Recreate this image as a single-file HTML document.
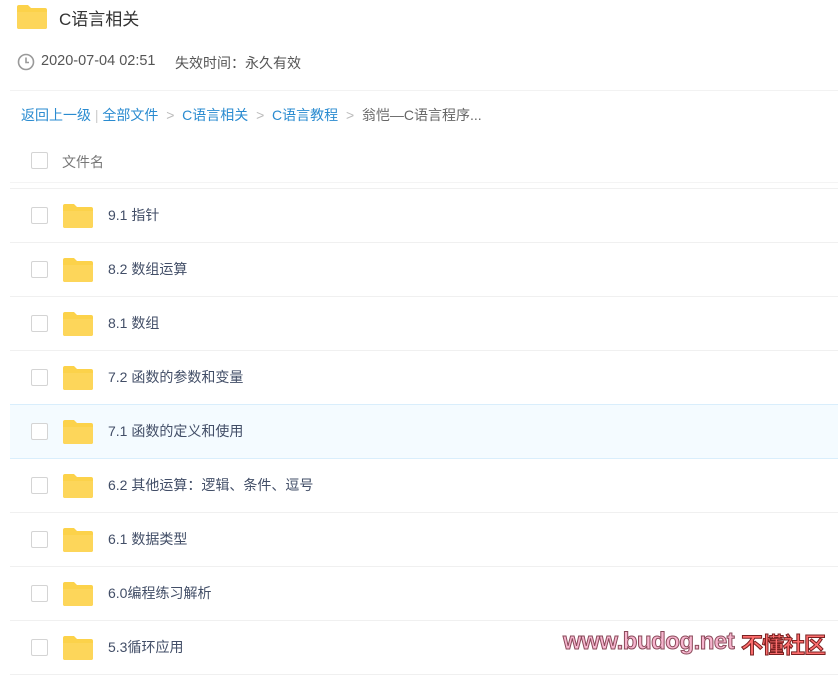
<!DOCTYPE html>
<html><head><meta charset="utf-8"><style>
body{margin:0;width:838px;height:666px;overflow:hidden;background:#fff;font-family:"Liberation Sans","Noto Sans CJK SC",sans-serif;position:relative}
.abs{position:absolute}
.cb{position:absolute;left:31px;width:15px;height:15px;border:1px solid #d4d4d4;border-radius:2px;background:#fff}
.row{position:absolute;left:10px;width:828px;height:53px;border-bottom:1px solid #f0f0f0}
.row .cb{left:21px;top:18px}
.row .f{position:absolute;left:52px;top:14px}
.row .t{position:absolute;left:98px;top:16px;font-size:14px;color:#424e67}
.hl{background:#f4fbff;border-top:1px solid #d9eefc;border-bottom:1px solid #d9eefc}
a{color:#2a8bd0;text-decoration:none}
</style></head><body>
<svg class="abs" style="left:16px;top:4px" width="32" height="26" viewBox="0 0 32 26"><path d="M1 3a2 2 0 0 1 2-2h9l3 3h14a2 2 0 0 1 2 2v17a2 2 0 0 1-2 2H3a2 2 0 0 1-2-2z" fill="#fcd24a"/><path d="M1 8h30v15a2 2 0 0 1-2 2H3a2 2 0 0 1-2-2z" fill="#fdd65a"/></svg>
<div class="abs" style="left:59px;top:5px;font-size:17px;color:#333">C语言相关</div>
<svg class="abs" style="left:17px;top:53px" width="18" height="18" viewBox="0 0 18 18"><circle cx="9" cy="9" r="7.5" fill="none" stroke="#999" stroke-width="1.6"/><path d="M9 4.5V9.5H12" fill="none" stroke="#999" stroke-width="1.6"/></svg>
<div class="abs" style="left:41px;top:53px;font-size:14.5px;color:#555">2020-07-04 02:51</div>
<div class="abs" style="left:175px;top:53px;font-size:14px;color:#555">失效时间：永久有效</div>
<div class="abs" style="left:10px;top:90px;width:828px;height:1px;background:#f2f2f2"></div>
<div class="abs" style="left:21px;top:105px;font-size:14px;color:#666;white-space:nowrap"><a>返回上一级</a><span style="color:#ccc"> | </span><a>全部文件</a> &nbsp;<span style="color:#bbb">&gt;</span>&nbsp; <a>C语言相关</a> &nbsp;<span style="color:#bbb">&gt;</span>&nbsp; <a>C语言教程</a> &nbsp;<span style="color:#bbb">&gt;</span>&nbsp; 翁恺—C语言程序...</div>
<div class="cb" style="top:152px"></div>
<div class="abs" style="left:62px;top:152px;font-size:14px;color:#777">文件名</div>
<div class="abs" style="left:10px;top:182px;width:828px;height:1px;background:#f4f4f4"></div>
<div class="abs" style="left:10px;top:188px;width:828px;height:1px;background:#f0f0f0"></div>

<div id="rows"></div>
<script>
var n=["9.1 指针","8.2 数组运算","8.1 数组","7.2 函数的参数和变量","7.1 函数的定义和使用","6.2 其他运算：逻辑、条件、逗号","6.1 数据类型","6.0编程练习解析","5.3循环应用"];
var h="";
n.forEach(function(t,i){var top=189+i*54;
h+='<div class="row'+(i==4?' hl':'')+'" style="top:'+(i==4?top-1:top)+'px"><div class="cb"></div><svg class="f" width="32" height="26" viewBox="0 0 32 26"><path d="M1 3a2 2 0 0 1 2-2h9l3 3h14a2 2 0 0 1 2 2v17a2 2 0 0 1-2 2H3a2 2 0 0 1-2-2z" fill="#fcd24a"/><path d="M1 8h30v15a2 2 0 0 1-2 2H3a2 2 0 0 1-2-2z" fill="#fdd65a"/></svg><div class="t">'+t+'</div></div>';});
document.getElementById("rows").innerHTML=h;
</script>
<div class="abs" style="left:563px;top:628px;font-size:24px;font-weight:bold;color:#f7b6cf;-webkit-text-stroke:1px #8a4a5a;font-family:'Liberation Sans',sans-serif;letter-spacing:-0.5px">www.budog.net</div>
<div class="abs" style="left:741px;top:628px;font-size:22px;font-weight:bold;color:#ff6f6f;-webkit-text-stroke:1px #7a2020;font-family:'Noto Sans CJK SC',sans-serif;letter-spacing:-1px">不懂社区</div>
</body></html>
